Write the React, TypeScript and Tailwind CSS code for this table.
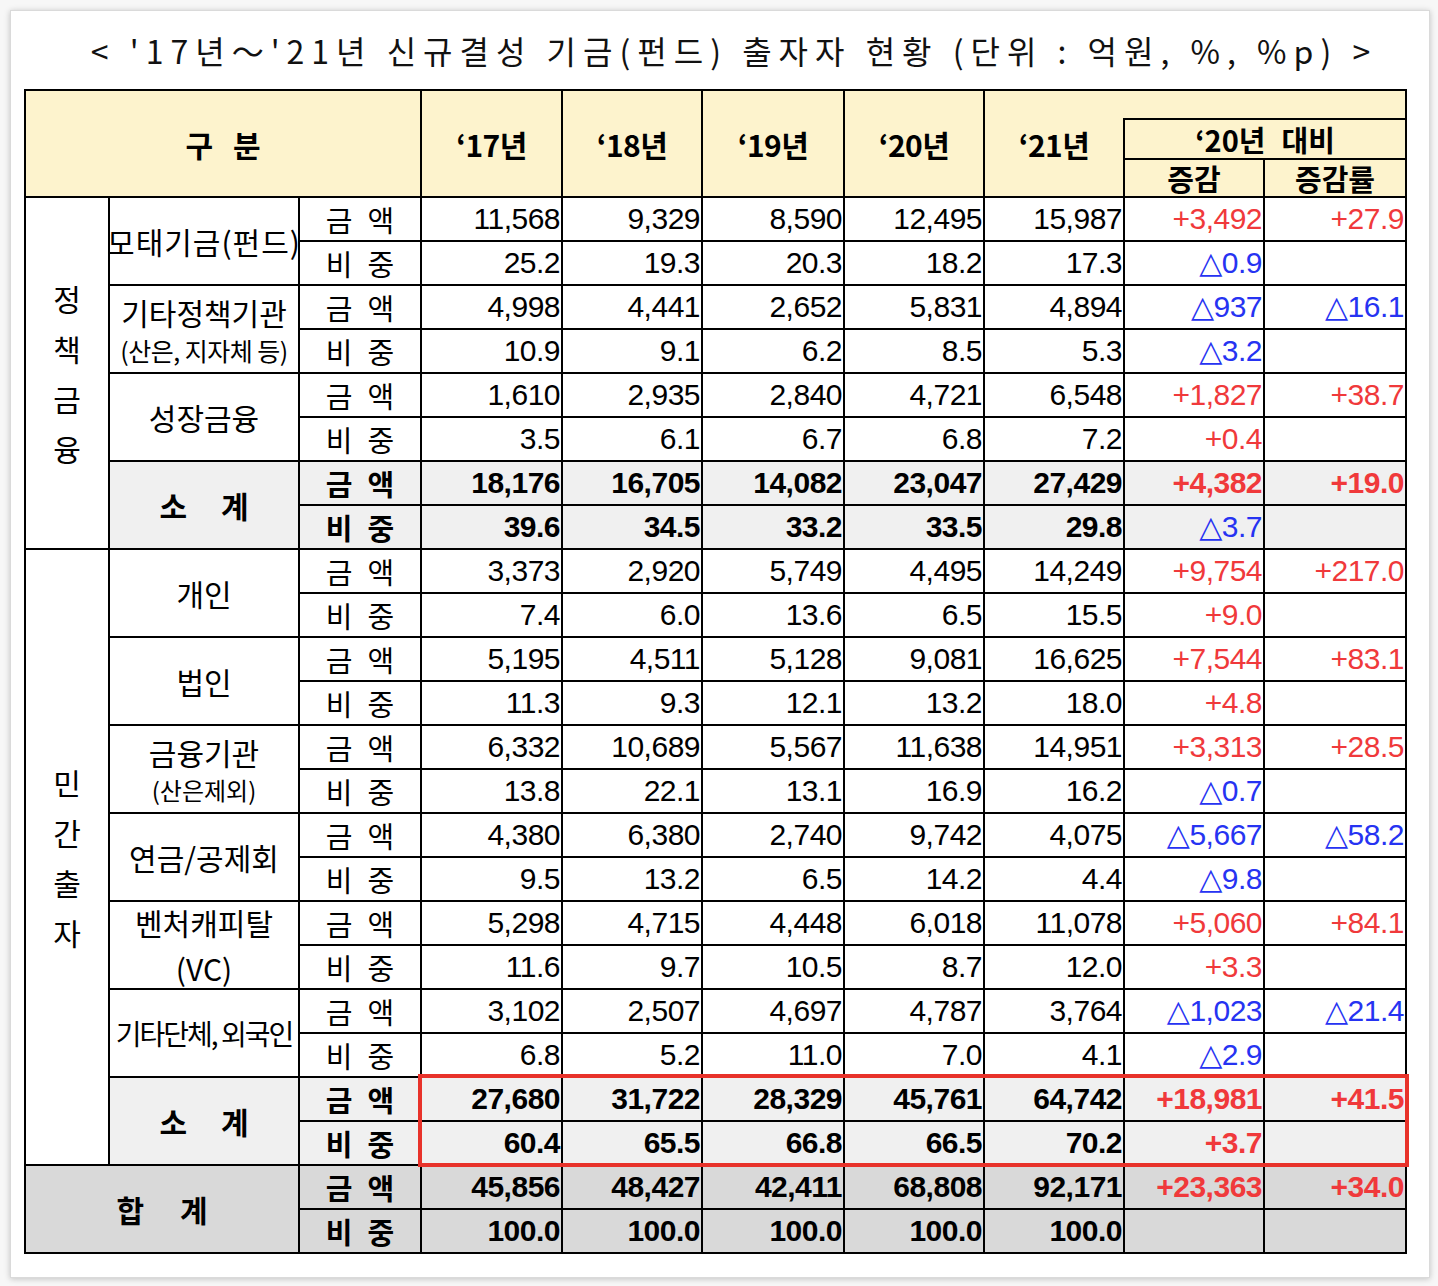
import React from 'react';

const KR = "font-['Noto_Sans_CJK_KR',sans-serif]";
const NUM = "font-['Liberation_Sans','DejaVu_Sans','Noto_Sans_CJK_KR',sans-serif]";

interface Item {
  name: React.ReactNode;
  amount: string[];
  amountChange: string;
  amountRate: string;
  share: string[];
  shareChange: string;
  subtotal?: boolean;
}

const policy: Item[] = [
  {
    name: <span className="text-[30px] tracking-[1px] whitespace-nowrap">모태기금(펀드)</span>,
    amount: ['11,568', '9,329', '8,590', '12,495', '15,987'],
    amountChange: '+3,492',
    amountRate: '+27.9',
    share: ['25.2', '19.3', '20.3', '18.2', '17.3'],
    shareChange: '△0.9',
  },
  {
    name: (
      <div className="flex flex-col items-center">
        <span className="text-[30px] leading-[42px] whitespace-nowrap">기타정책기관</span>
        <span className="text-[25px] leading-[34px] whitespace-nowrap tracking-[-0.5px]">(산은, 지자체 등)</span>
      </div>
    ),
    amount: ['4,998', '4,441', '2,652', '5,831', '4,894'],
    amountChange: '△937',
    amountRate: '△16.1',
    share: ['10.9', '9.1', '6.2', '8.5', '5.3'],
    shareChange: '△3.2',
  },
  {
    name: <span className="text-[30px]">성장금융</span>,
    amount: ['1,610', '2,935', '2,840', '4,721', '6,548'],
    amountChange: '+1,827',
    amountRate: '+38.7',
    share: ['3.5', '6.1', '6.7', '6.8', '7.2'],
    shareChange: '+0.4',
  },
  {
    name: 'sub',
    amount: ['18,176', '16,705', '14,082', '23,047', '27,429'],
    amountChange: '+4,382',
    amountRate: '+19.0',
    share: ['39.6', '34.5', '33.2', '33.5', '29.8'],
    shareChange: '△3.7',
    subtotal: true,
  },
];

const privateItems: Item[] = [
  {
    name: <span className="text-[30px]">개인</span>,
    amount: ['3,373', '2,920', '5,749', '4,495', '14,249'],
    amountChange: '+9,754',
    amountRate: '+217.0',
    share: ['7.4', '6.0', '13.6', '6.5', '15.5'],
    shareChange: '+9.0',
  },
  {
    name: <span className="text-[30px]">법인</span>,
    amount: ['5,195', '4,511', '5,128', '9,081', '16,625'],
    amountChange: '+7,544',
    amountRate: '+83.1',
    share: ['11.3', '9.3', '12.1', '13.2', '18.0'],
    shareChange: '+4.8',
  },
  {
    name: (
      <div className="flex flex-col items-center">
        <span className="text-[30px] leading-[42px]">금융기관</span>
        <span className="text-[24px] leading-[34px]">(산은제외)</span>
      </div>
    ),
    amount: ['6,332', '10,689', '5,567', '11,638', '14,951'],
    amountChange: '+3,313',
    amountRate: '+28.5',
    share: ['13.8', '22.1', '13.1', '16.9', '16.2'],
    shareChange: '△0.7',
  },
  {
    name: <span className="text-[30px]">연금/공제회</span>,
    amount: ['4,380', '6,380', '2,740', '9,742', '4,075'],
    amountChange: '△5,667',
    amountRate: '△58.2',
    share: ['9.5', '13.2', '6.5', '14.2', '4.4'],
    shareChange: '△9.8',
  },
  {
    name: (
      <div className="flex flex-col items-center gap-[10px] text-[30px] leading-[36px]">
        <span>벤처캐피탈</span>
        <span>(VC)</span>
      </div>
    ),
    amount: ['5,298', '4,715', '4,448', '6,018', '11,078'],
    amountChange: '+5,060',
    amountRate: '+84.1',
    share: ['11.6', '9.7', '10.5', '8.7', '12.0'],
    shareChange: '+3.3',
  },
  {
    name: <span className="text-[28px] tracking-[-2px] whitespace-nowrap">기타단체, 외국인</span>,
    amount: ['3,102', '2,507', '4,697', '4,787', '3,764'],
    amountChange: '△1,023',
    amountRate: '△21.4',
    share: ['6.8', '5.2', '11.0', '7.0', '4.1'],
    shareChange: '△2.9',
  },
  {
    name: 'sub',
    amount: ['27,680', '31,722', '28,329', '45,761', '64,742'],
    amountChange: '+18,981',
    amountRate: '+41.5',
    share: ['60.4', '65.5', '66.8', '66.5', '70.2'],
    shareChange: '+3.7',
    subtotal: true,
  },
];

const total: Item = {
  name: 'total',
  amount: ['45,856', '48,427', '42,411', '68,808', '92,171'],
  amountChange: '+23,363',
  amountRate: '+34.0',
  share: ['100.0', '100.0', '100.0', '100.0', '100.0'],
  shareChange: '',
};

const Num = ({ v, bold }: { v: string; bold?: boolean }) => {
  const color = v.startsWith('+') ? 'text-[#f0393b]' : v.startsWith('△') ? 'text-[#2633f2]' : 'text-black';
  const weight = bold && !v.startsWith('△') ? 'font-bold' : 'font-normal';
  return (
    <td className={`border-2 border-black p-0 pr-[1px] text-right align-middle text-[30px] leading-none tracking-[-0.5px] ${NUM} ${color} ${weight}`}>
      {v}
    </td>
  );
};

const Pair = ({ a, b, bold }: { a: string; b: string; bold?: boolean }) => (
  <td className={`border-2 border-black p-0 align-middle ${KR}`}>
    <div className={`flex justify-center gap-[15px] text-[29px] leading-none ${bold ? 'font-bold' : 'font-normal'}`}>
      <span>{a}</span>
      <span>{b}</span>
    </div>
  </td>
);

const Spread = ({ a, b, gap }: { a: string; b: string; gap: string }) => (
  <div className={`flex justify-center font-bold text-[30px] leading-none ${gap}`}>
    <span>{a}</span>
    <span>{b}</span>
  </div>
);

const Vertical = ({ chars }: { chars: string[] }) => (
  <div className="flex flex-col items-center text-[30px] leading-[50px]">
    {chars.map((c) => (
      <span key={c}>{c}</span>
    ))}
  </div>
);

const ItemRows = ({ item, group }: { item: Item; group?: React.ReactNode }) => {
  const bold = item.subtotal || item.name === 'total';
  const rowBg = item.subtotal ? 'bg-[#f0f0f0]' : item.name === 'total' ? 'bg-[#d9d9d9]' : 'bg-white';
  let label: React.ReactNode;
  if (item.name === 'sub') {
    label = (
      <td rowSpan={2} className={`border-2 border-black p-0 align-middle ${KR}`}>
        <Spread a="소" b="계" gap="gap-[34px]" />
      </td>
    );
  } else if (item.name === 'total') {
    label = (
      <td rowSpan={2} colSpan={2} className={`border-2 border-black p-0 align-middle ${KR}`}>
        <Spread a="합" b="계" gap="gap-[36px]" />
      </td>
    );
  } else {
    label = (
      <td rowSpan={2} className={`border-2 border-black p-0 align-middle text-center ${KR}`}>
        <div className="flex justify-center">{item.name}</div>
      </td>
    );
  }
  return (
    <>
      <tr className={`h-[44px] ${rowBg}`}>
        {group}
        {label}
        <Pair a="금" b="액" bold={bold} />
        {item.amount.map((v, i) => (
          <Num key={i} v={v} bold={bold} />
        ))}
        <Num v={item.amountChange} bold={bold} />
        <Num v={item.amountRate} bold={bold} />
      </tr>
      <tr className={`h-[44px] ${rowBg}`}>
        <Pair a="비" b="중" bold={bold} />
        {item.share.map((v, i) => (
          <Num key={i} v={v} bold={bold} />
        ))}
        <Num v={item.shareChange} bold={bold} />
        <Num v="" />
      </tr>
    </>
  );
};

const years = ['‘17년', '‘18년', '‘19년', '‘20년', '‘21년'];
const widths = [84, 190, 122, 141, 140, 142, 140, 140, 140, 142];

export default function App() {
  return (
    <div className="min-h-screen bg-[#f7f7f7] pl-[10px] pt-[10px]">
      <div className="w-[1420px] h-[1268px] bg-white border border-[#dadada] shadow-[0_1px_6px_rgba(0,0,0,0.22)] text-black">
        <div className="h-[78px] flex items-center justify-center pl-[28px]">
          <h1 className={`text-[32px] font-normal tracking-[7px] whitespace-pre text-[#111] ${KR}`}>
            {"< '17년～'21년 신규결성 기금(펀드) 출자자 현황 (단위 : 억원, %, %p) >"}
          </h1>
        </div>
        <div className="relative ml-[13px] w-[1383px]">
          <table className="border-collapse table-fixed w-[1383px]">
            <colgroup>
              {widths.map((w, i) => (
                <col key={i} style={{ width: w }} />
              ))}
            </colgroup>
            <thead className={`bg-[#fdf3cd] ${KR}`}>
              <tr className="h-[29px]">
                <th colSpan={3} rowSpan={3} className="border-2 border-black p-0 align-middle">
                  <Spread a="구" b="분" gap="gap-[20px]" />
                </th>
                {years.map((y, i) => (
                  <th
                    key={y}
                    rowSpan={3}
                    className={`border-2 border-black p-0 align-middle text-[30px] font-bold leading-none tracking-[-0.5px] ${i === 4 ? 'border-r-0' : ''}`}
                  >
                    {y}
                  </th>
                ))}
                <th colSpan={2} className="border-2 border-black border-l-0 border-b-2 p-0"></th>
              </tr>
              <tr className="h-[40px]">
                <th colSpan={2} className="border-2 border-black p-0 align-middle">
                  <div className="flex justify-center gap-[16px] text-[29px] font-bold leading-none">
                    <span>‘20년</span>
                    <span>대비</span>
                  </div>
                </th>
              </tr>
              <tr className="h-[38px]">
                <th className="border-2 border-black p-0 align-middle text-[29px] font-bold leading-none">증감</th>
                <th className="border-2 border-black p-0 align-middle text-[29px] font-bold leading-none">증감률</th>
              </tr>
            </thead>
            <tbody>
              {policy.map((item, i) => (
                <ItemRows
                  key={`p${i}`}
                  item={item}
                  group={
                    i === 0 ? (
                      <td rowSpan={8} className={`border-2 border-black p-0 align-middle bg-white ${KR}`}>
                        <Vertical chars={['정', '책', '금', '융']} />
                      </td>
                    ) : undefined
                  }
                />
              ))}
              {privateItems.map((item, i) => (
                <ItemRows
                  key={`m${i}`}
                  item={item}
                  group={
                    i === 0 ? (
                      <td rowSpan={14} className={`border-2 border-black p-0 align-middle bg-white ${KR}`}>
                        <Vertical chars={['민', '간', '출', '자']} />
                      </td>
                    ) : undefined
                  }
                />
              ))}
              <ItemRows item={total} />
            </tbody>
          </table>
          <div className="absolute left-[394px] top-[985px] w-[991px] h-[93px] border-4 border-[#e8322a]"></div>
        </div>
      </div>
    </div>
  );
}
